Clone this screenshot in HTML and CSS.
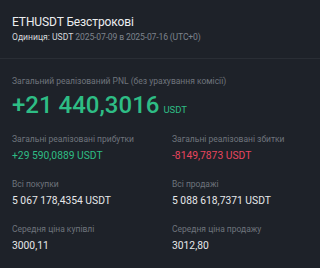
FILE: index.html
```html
<!DOCTYPE html>
<html lang="uk">
<head>
    <meta charset="UTF-8">
    <title>ETHUSDT PNL</title>
    <link rel="stylesheet" href="styles.css">
</head>
<body>
    <div class="header">
        <div class="title">ETHUSDT Безстрокові</div>
        <div class="subtitle">Одиниця: USDT <span class="dates">2025-07-09 в 2025-07-16 (UTC+0)</span></div>
    </div>

    <div class="content">
        <div class="label">Загальний реалізований PNL (без урахування комісії)</div>
        <div class="total">+21 440,3016<span class="total-unit">USDT</span></div>

        <div class="grid">
            <div class="cell">
                <div class="label">Загальні реалізовані прибутки</div>
                <div class="value green">+29 590,0889 USDT</div>
            </div>
            <div class="cell">
                <div class="label">Загальні реалізовані збитки</div>
                <div class="value red">-8149,7873 USDT</div>
            </div>
            <div class="cell">
                <div class="label">Всі покупки</div>
                <div class="value">5 067 178,4354 USDT</div>
            </div>
            <div class="cell">
                <div class="label">Всі продажі</div>
                <div class="value">5 088 618,7371 USDT</div>
            </div>
            <div class="cell">
                <div class="label">Середня ціна купівлі</div>
                <div class="value">3000,11</div>
            </div>
            <div class="cell">
                <div class="label">Середня ціна продажу</div>
                <div class="value">3012,80</div>
            </div>
        </div>
    </div>
</body>
</html>
```

FILE: styles.css
```css
body {
    margin: 0;
    background-color: #1e2229;
    font-family: 'Roboto', 'Liberation Sans', sans-serif;
    color: #e6e8ea;
}
.header {
    padding: 14px 12px 0;
    height: 44px;
    border-bottom: 1px solid #2a2e35;
}
.title {
    font-size: 12px;
    letter-spacing: -0.1px;
    line-height: 16px;
    color: #eceef0;
}
.subtitle {
    margin-top: 1px;
    font-size: 8.6px;
    line-height: 12px;
    color: #d6d9dc;
}
.dates {
    letter-spacing: -0.15px;
    color: #7d838c;
}
.content {
    padding: 16px 12px 0;
}
.label {
    font-size: 8.5px;
    line-height: 12px;
    color: #6e747c;
}
.total {
    margin-top: 4px;
    height: 28px;
    font-size: 24px;
    font-weight: 500;
    line-height: 28px;
    color: #2ebd85;
}
.total-unit {
    margin-left: 4px;
    font-size: 9.5px;
    font-weight: normal;
    line-height: 10px;
}
.grid {
    display: grid;
    grid-template-columns: 160px 1fr;
    row-gap: 15px;
    margin-top: 14px;
}
.value {
    margin-top: 4px;
    font-size: 10.3px;
    line-height: 14px;
    color: #e6e8ea;
}
.green {
    color: #2ebd85;
}
.red {
    color: #e8455f;
}
```
